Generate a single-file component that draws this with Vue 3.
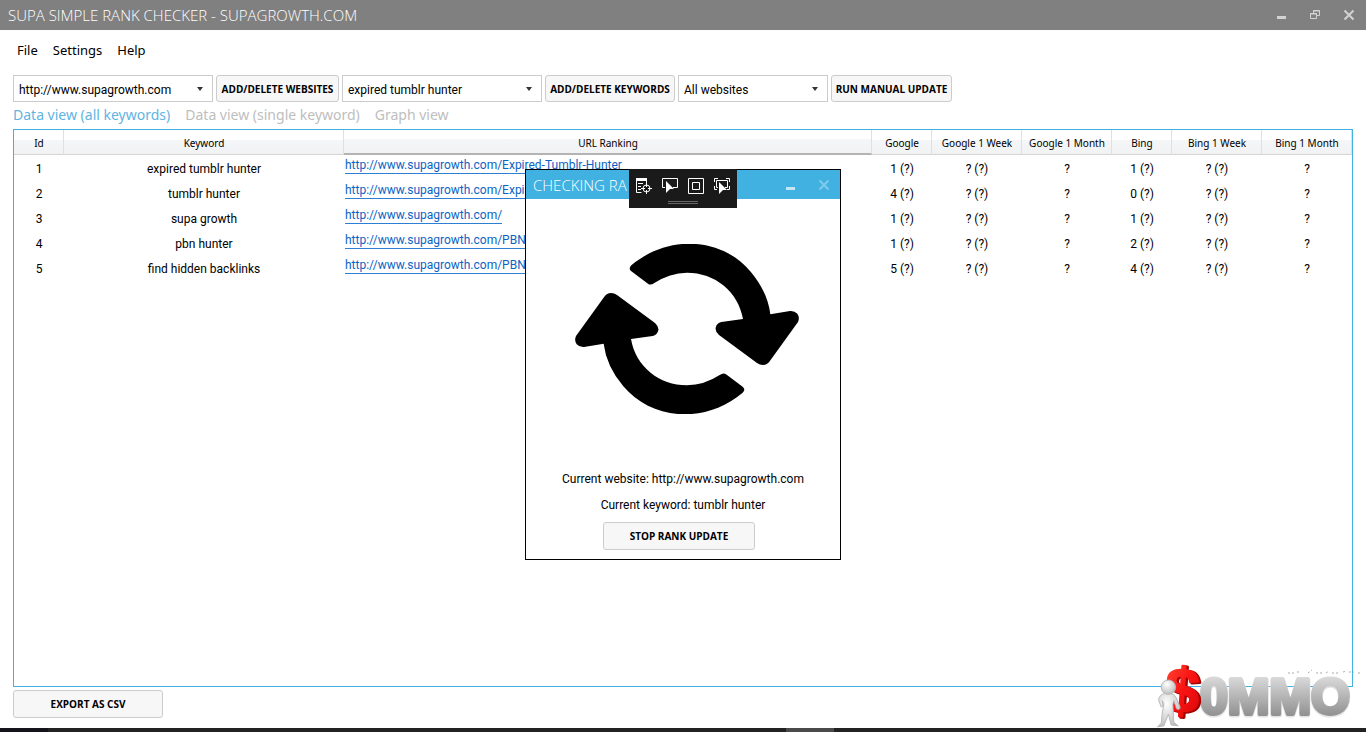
<script setup>
import { ref } from 'vue'

const site = ref('http://www.supagrowth.com')
const keyword = ref('expired tumblr hunter')
const scope = ref('All websites')

const columns = [
  { name: 'Id', cls: 'c-id' },
  { name: 'Keyword', cls: 'c-keyword' },
  { name: 'URL Ranking', cls: 'c-url' },
  { name: 'Google', cls: 'c-rank' },
  { name: 'Google 1 Week', cls: 'c-period' },
  { name: 'Google 1 Month', cls: 'c-period' },
  { name: 'Bing', cls: 'c-rank' },
  { name: 'Bing 1 Week', cls: 'c-period' },
  { name: 'Bing 1 Month', cls: 'c-period' }
]

const base = 'http://www.supagrowth.com/'
const rows = [
  { id: 1, keyword: 'expired tumblr hunter', url: base + 'Expired-Tumblr-Hunter', google: '1 (?)', bing: '1 (?)' },
  { id: 2, keyword: 'tumblr hunter', url: base + 'Expired-Tumblr-Hunter', google: '4 (?)', bing: '0 (?)' },
  { id: 3, keyword: 'supa growth', url: base, google: '1 (?)', bing: '1 (?)' },
  { id: 4, keyword: 'pbn hunter', url: base + 'PBN-Hunter', google: '1 (?)', bing: '2 (?)' },
  { id: 5, keyword: 'find hidden backlinks', url: base + 'PBN-Hunter', google: '5 (?)', bing: '4 (?)' }
]
</script>

<template>
  <div class="window">
    <header class="titlebar">
      <h1>SUPA SIMPLE RANK CHECKER - SUPAGROWTH.COM</h1>
      <div class="controls">
        <button aria-label="Minimize"><svg width="12" height="12"><path d="M2 7h9v3H2z" fill="#d2d2d2" /></svg></button>
        <button aria-label="Restore">
          <svg width="12" height="12" fill="none" stroke="#d2d2d2"><path d="M1.500 4.500h6v5h-6zM1 5h7M4.500 4V1.500h6v5H8M4 2h7" /></svg>
        </button>
        <button aria-label="Close"><svg width="12" height="12"><path d="M1.500 1.500l9 9M10.500 1.500l-9 9" stroke="#d2d2d2" stroke-width="2" /></svg></button>
      </div>
    </header>

    <nav class="menu">
      <button>File</button>
      <button>Settings</button>
      <button>Help</button>
    </nav>

    <main>
      <div class="toolbar">
        <div class="combo wide">
          <select v-model="site" aria-label="Website"><option>http://www.supagrowth.com</option></select>
        </div>
        <button class="btn b-web">ADD/DELETE WEBSITES</button>
        <div class="combo wide">
          <select v-model="keyword" aria-label="Keyword"><option>expired tumblr hunter</option></select>
        </div>
        <button class="btn b-key">ADD/DELETE KEYWORDS</button>
        <div class="combo narrow">
          <select v-model="scope" aria-label="Update scope"><option>All websites</option></select>
        </div>
        <button class="btn b-run">RUN MANUAL UPDATE</button>
      </div>

      <div class="tabs" role="tablist">
        <button role="tab" aria-selected="true" class="active">Data view (all keywords)</button>
        <button role="tab" aria-selected="false">Data view (single keyword)</button>
        <button role="tab" aria-selected="false">Graph view</button>
      </div>

      <div class="grid">
        <table>
          <thead>
            <tr>
              <th v-for="c in columns" :key="c.name" :class="c.cls">{{ c.name }}</th>
            </tr>
          </thead>
          <tbody>
            <tr v-for="r in rows" :key="r.id">
              <td>{{ r.id }}</td>
              <td>{{ r.keyword }}</td>
              <td class="url"><a :href="r.url">{{ r.url }}</a></td>
              <td>{{ r.google }}</td>
              <td>? (?)</td>
              <td>?</td>
              <td>{{ r.bing }}</td>
              <td>? (?)</td>
              <td>?</td>
            </tr>
          </tbody>
        </table>
      </div>

      <button class="btn export">EXPORT AS CSV</button>
    </main>

    <div class="taskbar"><span class="start"></span><span class="task"></span></div>

    <section class="dialog" role="dialog" aria-label="Checking rank">
      <header>
        <h2>CHECKING RA</h2>
        <div class="controls">
          <button aria-label="Minimize dialog"><svg width="12" height="12"><path d="M2 8h9v3H2z" fill="#c3e6f5" /></svg></button>
          <button aria-label="Close dialog"><svg width="12" height="12"><path d="M1.500 1.500l9 9M10.500 1.500l-9 9" stroke="#80cbeb" stroke-width="2" /></svg></button>
        </div>
        <div class="debugbar">
          <div class="tools">
            <svg width="18" height="18" fill="none" stroke="#fff">
              <path d="M1 1h11v3H1z" fill="#fff" stroke="none" />
              <path d="M1.500 3v12.500h5M3 6.500h5M3 9.500h3M3 12.500h3M11.500 4v2" />
              <circle cx="11.500" cy="11.500" r="3.500" />
              <path d="M11.500 6v4M11.500 13v4M6 11.500h4M13 11.500h4" />
            </svg>
            <svg width="18" height="18" fill="none" stroke="#fff">
              <path d="M4 10.500H1.500v-9h15v9H12" />
              <path d="M5 4l8 8H9l-4 4z" fill="#fff" stroke="none" />
            </svg>
            <svg width="18" height="18" fill="none" stroke="#fff">
              <path d="M1.500 1.500h15v15h-15zM5.500 5.500h7v7h-7z" />
            </svg>
            <svg width="18" height="18" fill="none" stroke="#fff">
              <path d="M1.500 5V1.500H5M13 1.500h3.500V5M16.500 9v3.500H14M4 12.500H1.500V9M5 10.500H3.500v-7h11v7H12" />
              <path d="M6 5l8 8h-4l-4 4z" fill="#fff" stroke="none" />
            </svg>
          </div>
          <div class="grip"></div>
        </div>
      </header>
      <svg class="sync" viewBox="45 42 672 510" aria-hidden="true">
        <path id="arrow" d="M214 106C326 11 487 23 572 125Q623 186 631 253L690 243Q704 242 712 251Q720 262 714 276L628 395Q622 404 609 405Q599 405 591 399L477 315Q465 304 467 293Q470 279 484 276L549 267C535 184 464 128 381 128Q329 129 283 159Q271 167 264 161L214 124Q204 116 214 106Z" />
        <use href="#arrow" transform="rotate(180 381 297)" />
      </svg>
      <p>Current website: http://www.supagrowth.com</p>
      <p>Current keyword: tumblr hunter</p>
      <button class="btn stop">STOP RANK UPDATE</button>
    </section>

    <svg class="brand" width="210" height="76" viewBox="0 0 210 76" role="img" aria-label="$0MMO">
      <defs>
        <linearGradient id="silver" x1="0" y1="0" x2="0" y2="1">
          <stop offset="0.1" stop-color="#dedede" /><stop offset="0.85" stop-color="#8f8f8f" />
        </linearGradient>
        <linearGradient id="red" x1="0" y1="0" x2="1" y2="1">
          <stop offset="0" stop-color="#ff4b35" /><stop offset="0.5" stop-color="#fa1414" /><stop offset="1" stop-color="#d80606" />
        </linearGradient>
        <radialGradient id="skin" cx="0.4" cy="0.3" r="0.8">
          <stop offset="0" stop-color="#fff" /><stop offset="1" stop-color="#b5b5b5" />
        </radialGradient>
      </defs>
      <path d="M137 19h6m3-1h3m8 1l4-3m4 3h7m3 0l3-2m3 2h8m3-1l4-1m2 1h5m4 1h2" stroke="#aaa" stroke-dasharray="2 2" fill="none" />
      <g font-family="'Liberation Sans', Arial, sans-serif" font-weight="bold">
        <g font-size="50" stroke-linejoin="round">
          <text x="49" y="61" fill="#777" stroke="#e4e4e4" stroke-width="5">0MMO</text>
          <text x="49" y="60" fill="url(#silver)" stroke="url(#silver)" stroke-width="4">0MMO</text>
        </g>
        <g font-size="62" stroke-linejoin="round" transform="rotate(4 35 35)">
          <text x="16" y="59" fill="#a50000" stroke="#a50000" stroke-width="3">$</text>
          <text x="14" y="58" fill="url(#red)" stroke="url(#red)" stroke-width="2">$</text>
        </g>
      </g>
      <g fill="url(#skin)" stroke="#b5b5b5" transform="translate(3 8) scale(0.9)">
        <path d="M12 35Q6 36 5 42l3 8 2-1-1-6 2 3-2 12-1 10-4 4 7-1 5-13 3 12 8 1-5-4-1-20 1-4 3 9q4 2 4-2l-4-10Q22 35 19 35z" />
        <circle cx="16" cy="28" r="8" />
      </g>
    </svg>
  </div>
</template>

<style>
html,
body {
  background: #fff;
}
</style>

<style scoped>
.window {
  position: relative;
  display: flex;
  flex-direction: column;
  min-height: 100vh;
  box-sizing: border-box;
  font-family: "Noto Sans", "Open Sans", sans-serif;
  font-size: 12px;
  color: #000;
}
.window *,
.window *::before {
  box-sizing: border-box;
}
button,
select {
  font: inherit;
  color: inherit;
  margin: 0;
  padding: 0;
  border: 0;
  background: none;
}
h1,
h2,
p {
  margin: 0;
  font-weight: normal;
}
svg {
  display: block;
}
.titlebar {
  display: flex;
  align-items: center;
  justify-content: space-between;
  height: 30px;
  padding: 0 11px 0 8px;
  background: #808080;
  color: #fff;
}
h1,
h2 {
  font-family: "Open Sans", sans-serif;
  font-size: 15px;
  font-weight: 300;
  line-height: 30px;
  white-space: nowrap;
}
.controls {
  display: flex;
  gap: 22px;
}
.menu {
  display: flex;
  gap: 15px;
  padding: 10px 17px;
  font-size: 13px;
  line-height: 20px;
}
main {
  flex: 1;
  display: flex;
  flex-direction: column;
  padding: 5px 13px 10px;
}
.toolbar {
  display: flex;
  gap: 3px;
}
.combo {
  position: relative;
  height: 27px;
}
.combo::after {
  content: "";
  position: absolute;
  right: 10px;
  top: 12px;
  border: 3px solid transparent;
  border-top: 4px solid #333;
  border-bottom: 0;
  pointer-events: none;
}
.combo select {
  appearance: none;
  width: 100%;
  height: 27px;
  padding: 2px 20px 0 5px;
  border: 1px solid #ccc;
  background: #fff;
}
.combo select,
td,
.dialog p {
  font-family: Roboto, "Noto Sans", sans-serif;
}
.wide {
  width: 200px;
}
.narrow {
  width: 150px;
}
.btn {
  height: 27px;
  border: 1px solid #ccc;
  border-radius: 3px;
  background: #f7f7f7;
  font-family: "Open Sans", sans-serif;
  font-size: 10px;
  font-weight: bold;
  white-space: nowrap;
}
.b-web {
  width: 123px;
}
.b-key {
  width: 130px;
}
.b-run {
  width: 121px;
}
.tabs {
  display: flex;
  gap: 15px;
  padding: 3px 0 4px;
  font-size: 14px;
  line-height: 20px;
  color: #bebebe;
}
.tabs .active {
  color: #5fb4e2;
}
.grid {
  flex: 1;
  border: 1px solid #41b1e1;
}
table {
  width: 100%;
  table-layout: fixed;
  border-collapse: separate;
  border-spacing: 0;
}
th {
  height: 25px;
  padding: 2px 0 0 1px;
  border-right: 1px solid #dfe0e2;
  border-bottom: 1px solid #d5d5d5;
  background: linear-gradient(#fff 40%, #f5f6f8 41%, #f1f2f4);
  font-size: 10px;
  font-weight: normal;
  white-space: nowrap;
}
.c-id {
  width: 50px;
}
.c-keyword {
  width: 280px;
}
.c-url {
  border-bottom: 2px solid #b4b4b4;
}
.c-rank {
  width: 60px;
}
.c-period {
  width: 90px;
}
td {
  height: 25px;
  padding: 3px 0 0;
  text-align: center;
  line-height: 16px;
  white-space: nowrap;
}
td.url {
  padding: 0 1px 4px;
  text-align: left;
}
.url a {
  display: inline-block;
  height: 17px;
  border-bottom: 1px solid #2d7fd3;
  color: #0c63c4;
  text-decoration: none;
}
.export {
  align-self: flex-start;
  width: 150px;
  height: 28px;
  margin-top: 3px;
}
.taskbar {
  position: relative;
  height: 4px;
  background: #222;
}
.start,
.task {
  position: absolute;
  top: 0;
  bottom: 0;
}
.start {
  left: 0;
  width: 48px;
  background: #15131c;
}
.task {
  left: 786px;
  width: 48px;
  background: #4a4a4a;
}
.dialog {
  position: absolute;
  left: 50%;
  top: 169px;
  width: 316px;
  transform: translateX(-50%);
  display: flex;
  flex-direction: column;
  align-items: center;
  padding-bottom: 9px;
  border: 1px solid #000;
  background: #fff;
}
.dialog header {
  position: relative;
  align-self: stretch;
  display: flex;
  align-items: center;
  justify-content: space-between;
  height: 29px;
  padding: 0 10px 0 7px;
  background: #41b1e1;
  color: #fff;
}
.debugbar {
  position: absolute;
  left: 103px;
  top: -1px;
  width: 108px;
  height: 39px;
  padding: 8px 6px 0;
  background: #1a1a1a;
}
.tools {
  display: flex;
  gap: 8px;
}
.grip {
  width: 30px;
  height: 3px;
  margin: 6px auto 0;
  border: 1px solid #666;
  border-width: 1px 0;
}
.sync {
  width: 224px;
  height: 170px;
  margin: 45px 0 55px 8px;
}
.dialog p {
  height: 26px;
  line-height: 20px;
}
.stop {
  width: 152px;
  height: 28px;
  margin: 1px 8px 0 0;
}
.brand {
  position: absolute;
  right: 5px;
  bottom: 2px;
}
</style>
